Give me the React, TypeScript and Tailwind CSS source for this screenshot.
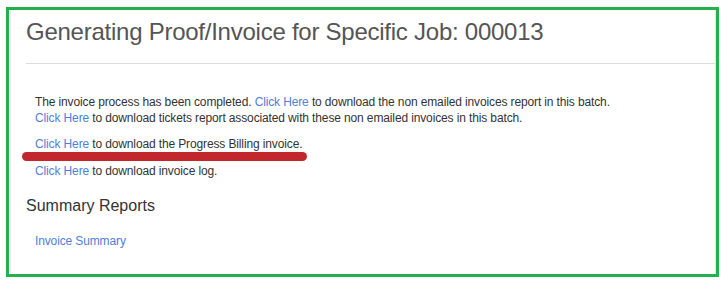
export default function App() {
  return (
    <div className="relative h-[285px] w-[723px] overflow-hidden bg-white pl-[6px] pt-[7px] font-['Liberation_Sans',Arial,sans-serif]">
      <div className="h-[270px] w-[713px] border-[3px] border-[#22b14c]">
        <div className="ml-[1px] h-full border-x border-[#e6e6e6]">
          <h1 className="pl-[15px] pt-[7px] text-[24px] leading-[30px] tracking-[-0.25px] font-normal text-[#555]">
            Generating Proof/Invoice for Specific Job: 000013
          </h1>
          <hr className="ml-[15px] mt-[16px] border-t border-[#dcdcdc]" />

          <div className="mt-[30px] pl-[24px] text-[12px] leading-[16px] tracking-[-0.13px] text-[#333]">
            <p>
              The invoice process has been completed.{" "}
              <a className="text-[#4f80d8]">Click Here</a> to download the non emailed invoices
              report in this batch.
              <br />
              <a className="text-[#4f80d8]">Click Here</a> to download tickets report associated
              with these non emailed invoices in this batch.
            </p>
            <p className="mt-[10px]">
              <a className="text-[#4f80d8]">Click Here</a> to download the Progress Billing
              invoice.
            </p>
            <p className="mt-[11px]">
              <a className="text-[#4f80d8]">Click Here</a> to download invoice log.
            </p>
          </div>

          <h2 className="mt-[17px] pl-[15px] text-[16px] leading-[20px] font-normal text-[#333]">
            Summary Reports
          </h2>
          <div className="mt-[17px] pl-[24px] text-[12px] leading-[16px] tracking-[-0.13px]">
            <a className="text-[#4f80d8]">Invoice Summary</a>
          </div>
        </div>
      </div>

      {/* annotation stroke */}
      <div className="absolute left-[22px] top-[152px] h-[9px] w-[285px] rounded-full bg-[#c1272d]" />
    </div>
  );
}
